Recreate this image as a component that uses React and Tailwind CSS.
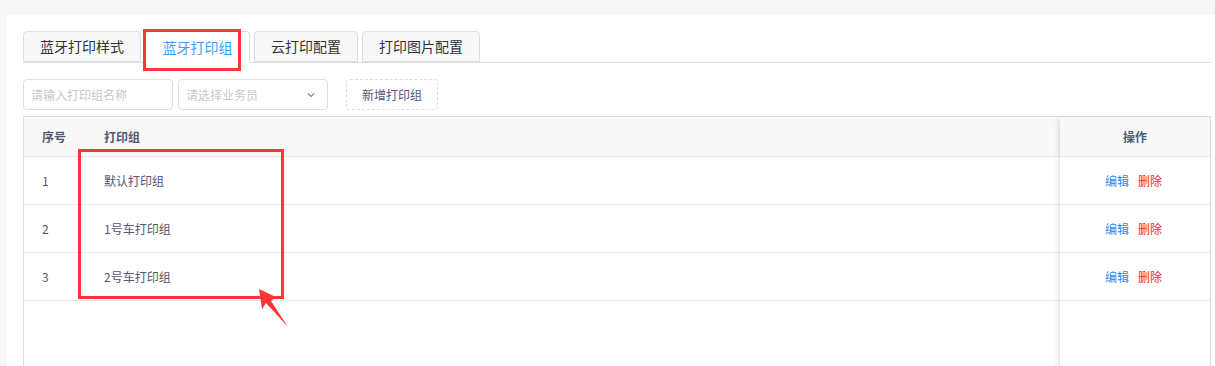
import React from "react";

const font = { fontFamily: '"Noto Sans CJK SC", "Noto Sans", sans-serif' };

const tabs = [
  { label: "蓝牙打印样式", w: "w-[118px]" },
  { label: "蓝牙打印组", w: "w-[105px]", active: true },
  { label: "云打印配置", w: "w-[104px]" },
  { label: "打印图片配置", w: "w-[118px]" },
];

const rows = [
  { id: 1, name: "默认打印组" },
  { id: 2, name: "1号车打印组" },
  { id: 3, name: "2号车打印组" },
];

export default function App() {
  return (
    <div
      className="relative h-[366px] w-[1215px] overflow-hidden bg-[#f7f7f7] pl-[7px] pt-[15px]"
      style={font}
    >
      <div className="h-[400px] w-[1220px] rounded-[4px] bg-white px-4 pt-4">
        {/* Tabs */}
        <div className="flex h-[32px] items-end gap-[4px] border-b border-[#dcdee2]">
          {tabs.map((t, i) => (
            <div
              key={i}
              className={`${t.w} ${
                t.active
                  ? "-mb-px h-[32px] border-b-white bg-white text-[#409eff]"
                  : "h-[31px] bg-[#f8f8f9] text-[#333]"
              } flex items-center justify-center rounded-t-[4px] border border-[#dcdee2] text-[14px]`}
            >
              {t.label}
            </div>
          ))}
        </div>

        {/* Filters */}
        <div className="mt-[16px] flex h-[31px] items-center">
          <div className="flex h-[31px] w-[150px] items-center rounded-[4px] border border-[#dcdee2] px-[7px] text-[12px] text-[#c5c8ce]">
            请输入打印组名称
          </div>
          <div className="ml-[5px] flex h-[31px] w-[150px] items-center justify-between rounded-[4px] border border-[#dcdee2] px-[7px] text-[12px] text-[#c5c8ce]">
            <span>请选择业务员</span>
            <svg width="12" height="12" viewBox="0 0 12 12" className="mr-[3px]">
              <path d="M3 4.5 L6 7.5 L9 4.5" fill="none" stroke="#808695" strokeWidth="1.2" />
            </svg>
          </div>
          <div className="ml-[18px] flex h-[31px] w-[92px] items-center justify-center rounded-[4px] border border-dashed border-[#dcdee2] text-[12px] text-[#515a6e]">
            新增打印组
          </div>
        </div>

        {/* Table */}
        <div className="relative mt-[6px] w-[1188px] border border-[#dcdee2] text-[12px] text-[#515a6e]">
          <div className="flex h-[40px] items-center border-b border-[#e8eaec] bg-[#f8f8f9] font-semibold">
            <div className="w-[62px] pl-[18px]">序号</div>
            <div className="flex-1 pl-[18px]">打印组</div>
          </div>
          {rows.map((r) => (
            <div key={r.id} className="flex h-[48px] items-center border-b border-[#e8eaec]">
              <div className="w-[62px] pl-[18px]">{r.id}</div>
              <div className="flex-1 pl-[18px]">{r.name}</div>
            </div>
          ))}
          <div className="h-[80px]" />

          {/* Fixed right column */}
          <div className="absolute right-0 top-0 h-full w-[150px] bg-white shadow-[-2px_0_6px_-2px_rgba(0,0,0,0.2)]">
            <div className="flex h-[40px] items-center justify-center border-b border-[#e8eaec] bg-[#f8f8f9] font-semibold">
              操作
            </div>
            {rows.map((r) => (
              <div
                key={r.id}
                className="flex h-[48px] items-center justify-center gap-[9px] border-b border-[#e8eaec] pr-[3px]"
              >
                <span className="text-[#2d8cf0]">编辑</span>
                <span className="text-[#ff1a1a]">删除</span>
              </div>
            ))}
          </div>
        </div>
      </div>

      {/* Annotations */}
      <div className="absolute left-[143px] top-[29px] h-[42px] w-[98px] border-[3px] border-[#ff3636]" />
      <div className="absolute left-[78px] top-[149px] h-[150px] w-[206px] border-[3px] border-[#ff3636]" />
      <svg className="absolute left-0 top-0" width="1215" height="366" style={{ pointerEvents: "none" }}>
        <polygon
          points="259,289 276,297 271,301 288,327 266,303 262,309"
          fill="#ff3636"
        />
      </svg>
    </div>
  );
}
